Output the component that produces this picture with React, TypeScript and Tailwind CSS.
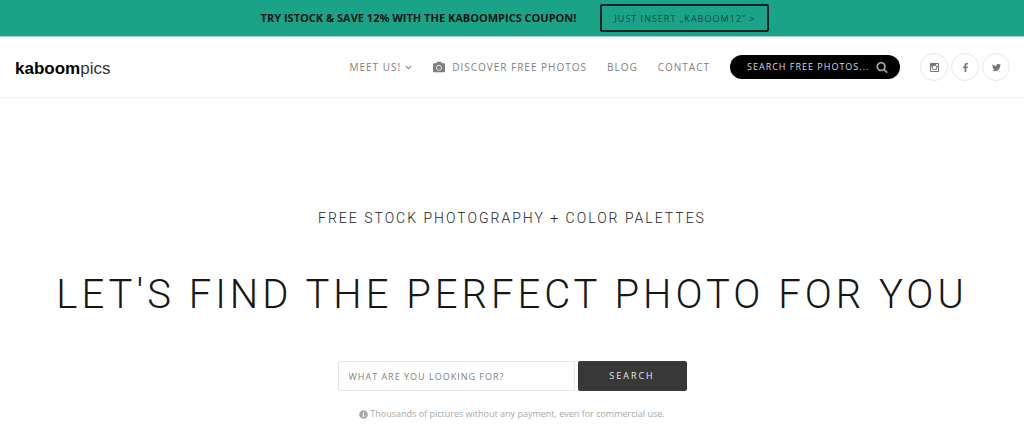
import React from 'react';
import { FaCamera, FaFacebookF, FaInfoCircle, FaTwitter } from 'react-icons/fa';
import { FiChevronDown } from 'react-icons/fi';

const InstagramIcon = () => (
    <svg viewBox="0 128 1536 1536" className="w-[9px] h-[9px]" fill="currentColor" aria-hidden="true">
        <path d="M1362 1426v-648h-135q20 63 20 131 0 126-64 232.5t-174 168.5-240 62q-197 0-337-135.5t-140-327.5q0-68 20-131h-141v648q0 26 17.5 43.5t43.5 17.5h1069q25 0 43-17.5t18-43.5zm-284-533q0-124-90.5-211.5t-218.5-87.5q-127 0-217.5 87.5t-90.5 211.5 90.5 211.5 217.5 87.5q128 0 218.5-87.5t90.5-211.5zm284-360v-165q0-28-20-48.5t-49-20.5h-174q-29 0-49 20.5t-20 48.5v165q0 29 20 49t49 20h174q29 0 49-20t20-49zm174-208v1142q0 81-58 139t-139 58h-1142q-81 0-139-58t-58-139v-1142q0-81 58-139t139-58h1142q81 0 139 58t58 139z" />
    </svg>
);

const SearchIcon = () => (
    <svg viewBox="0 0 1792 1792" className="w-3 h-3" fill="currentColor" aria-hidden="true">
        <path d="M1216 832q0-185-131.5-316.5t-316.5-131.5-316.5 131.5-131.5 316.5 131.5 316.5 316.5 131.5 316.5-131.5 131.5-316.5zm512 832q0 52-38 90t-90 38q-54 0-90-38l-343-342q-179 124-399 124-143 0-273.5-55.5t-225-150-150-225-55.5-273.5 55.5-273.5 150-225 225-150 273.5-55.5 273.5 55.5 225 150 150 225 55.5 273.5q0 220-124 399l343 343q37 37 37 90z" />
    </svg>
);

const socials = [
    { label: 'Instagram', icon: <InstagramIcon /> },
    { label: 'Facebook', icon: <FaFacebookF className="w-[9px] h-[9px]" /> },
    { label: 'Twitter', icon: <FaTwitter className="w-[9px] h-[9px]" /> },
];

const PromoBar = () => (
    <div className="flex items-center justify-center gap-6 min-h-[37px] border-b border-[#a4dacd] bg-[#1ba388] pl-[6px]">
        <p className="text-[11px] leading-4 font-bold text-[#0b1512]">
            TRY ISTOCK &amp; SAVE 12% WITH THE KABOOMPICS COUPON!
        </p>
        <a
            href="#coupon"
            className="rounded-xs border-2 border-[#12231f] px-3 pt-[5px] pb-[3px] text-[9px] leading-4 tracking-[1px] text-[#14493e]"
        >
            JUST INSERT „KABOOM12” &gt;
        </a>
    </div>
);

const Header = () => (
    <header className="flex items-center justify-between min-h-[61px] border-b border-[#f2f2f2] pl-[15px] pr-[14px]">
        <a href="#home" className="pt-1 font-['Liberation_Sans',Arial,sans-serif] text-[17px] leading-5 text-[#333]">
            <span className="font-bold text-black">kaboom</span>pics
        </a>
        <div className="flex items-center">
            <nav className="flex items-center gap-5 text-[10px] leading-4 tracking-[1px] text-[#808080]">
                <a href="#meet" className="flex items-center gap-[3px]">
                    MEET US!
                    <FiChevronDown className="w-[9px] h-[9px]" strokeWidth={3} />
                </a>
                <a href="#photos" className="flex items-center gap-[7px]">
                    <FaCamera className="w-3 h-3" />
                    DISCOVER FREE PHOTOS
                </a>
                <a href="#blog">BLOG</a>
                <a href="#contact">CONTACT</a>
            </nav>
            <form
                role="search"
                className="flex items-center justify-between mx-5 h-6 w-[170px] rounded-full bg-black pl-[17px] pr-3 text-[#a5a5a5]"
                onSubmit={(e) => e.preventDefault()}
            >
                <input
                    type="text"
                    aria-label="Search free photos"
                    placeholder="SEARCH FREE PHOTOS..."
                    className="w-[124px] bg-transparent text-[9px] leading-4 tracking-[1px] outline-none placeholder:text-[#dcdcdc]"
                />
                <button type="submit" aria-label="Search">
                    <SearchIcon />
                </button>
            </form>
            <div className="flex gap-[3px]">
                {socials.map((social) => (
                    <a
                        key={social.label}
                        href={`#${social.label.toLowerCase()}`}
                        aria-label={social.label}
                        className="flex items-center justify-center w-7 h-7 rounded-full border border-[#e8e8e8] text-[#777]"
                    >
                        {social.icon}
                    </a>
                ))}
            </div>
        </div>
    </header>
);

const Hero = () => (
    <main className="flex flex-col items-center pt-[110px] text-center">
        <h2 className="font-[Roboto,sans-serif] font-light text-[14px] leading-5 tracking-[2px] text-[#222]">
            FREE STOCK PHOTOGRAPHY + COLOR PALETTES
        </h2>
        <h1 className="mt-[43px] font-[Roboto,sans-serif] font-light text-[40px] leading-[48px] tracking-[4px] text-[#161616]">
            LET'S FIND THE PERFECT PHOTO FOR YOU
        </h1>
        <form className="flex gap-[3px] mt-[42px]" onSubmit={(e) => e.preventDefault()}>
            <input
                type="text"
                aria-label="What are you looking for?"
                placeholder="WHAT ARE YOU LOOKING FOR?"
                className="w-[237px] h-[30px] rounded-xs border border-[#e6e6e6] px-[10px] text-[9px] tracking-[1px] outline-none placeholder:text-[#808080]"
            />
            <button type="submit" className="w-[109px] h-[30px] rounded-xs bg-[#383838] text-[9px] tracking-[2px] text-[#e8e8e8]">
                SEARCH
            </button>
        </form>
        <p className="flex items-center gap-[2px] mt-[15px] text-[9px] leading-4 text-[#a9a9a9]">
            <FaInfoCircle className="w-[9px] h-[9px]" />
            Thousands of pictures without any payment, even for commercial use.
        </p>
    </main>
);

export default function App() {
    return (
        <div className="bg-white font-['Open_Sans',sans-serif]">
            <PromoBar />
            <Header />
            <Hero />
        </div>
    );
}
